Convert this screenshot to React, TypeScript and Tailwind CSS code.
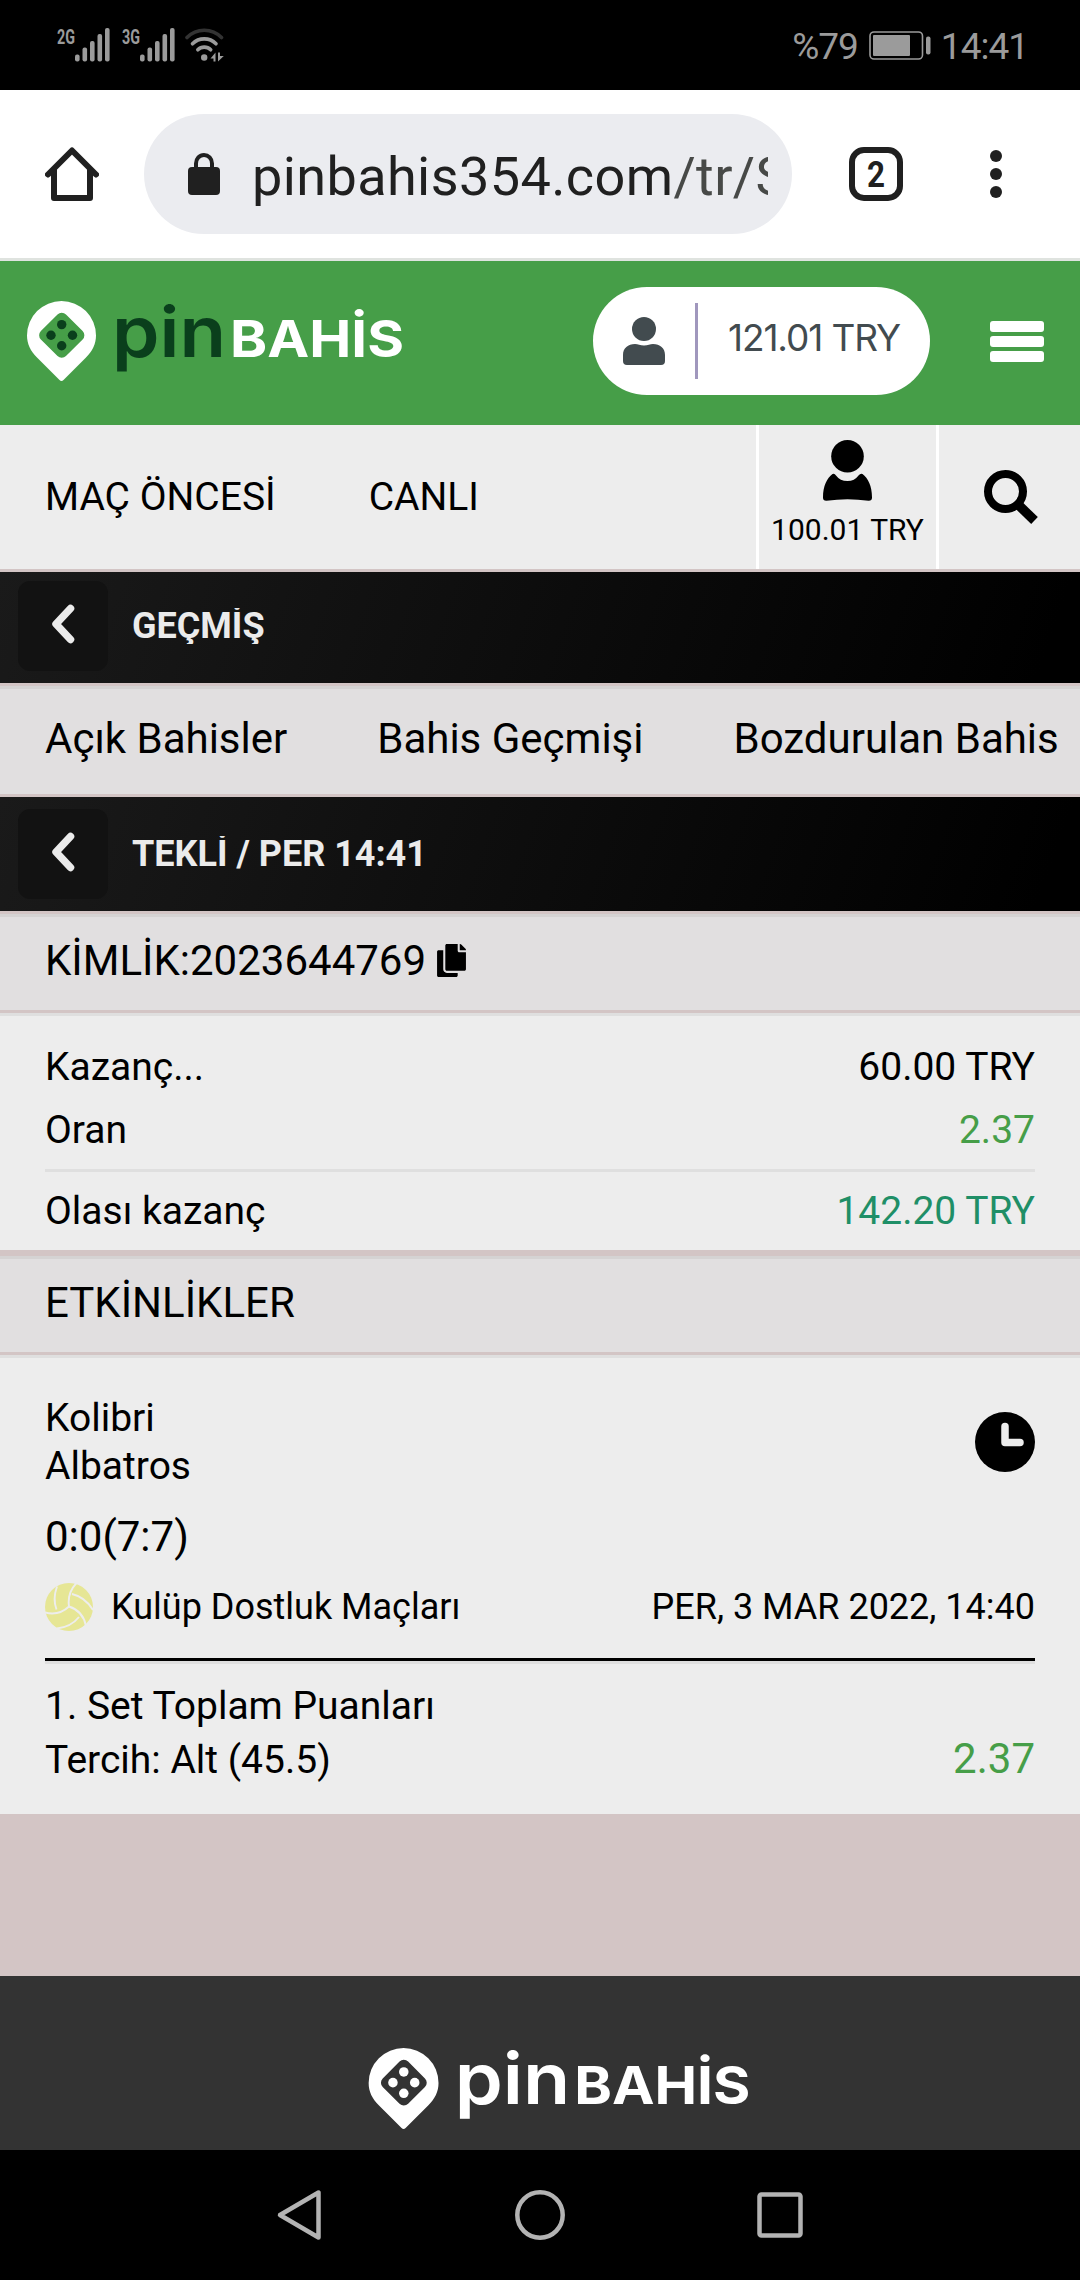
import { ReactNode } from "react";
import { FaCopy } from "react-icons/fa";

function SignalIcon({ label }: { label: string }) {
  return (
    <svg width="65" height="34" viewBox="0 0 65 34" className="shrink-0 overflow-visible" aria-hidden>
      <text
        x="0"
        y="15.5"
        textLength="18"
        lengthAdjust="spacingAndGlyphs"
        fill="#9b9b9b"
        className="font-['Roboto'] text-[21px] font-bold"
      >
        {label}
      </text>
      <g fill="#9b9b9b">
        <rect x="18" y="26.5" width="4.6" height="7" rx="2" />
        <rect x="25.5" y="19.5" width="4.6" height="14" rx="2" />
        <rect x="33" y="13" width="4.6" height="20.5" rx="2" />
        <rect x="40.5" y="6" width="4.6" height="27.5" rx="2" />
        <rect x="48" y="0" width="4.6" height="33.5" rx="2" />
      </g>
    </svg>
  );
}

function WifiIcon() {
  return (
    <svg width="39" height="34" viewBox="0 0 39 34" className="-ml-[2px] shrink-0" aria-hidden>
      <g fill="none" strokeWidth="3.6" strokeLinecap="round">
        <path d="M2 9.5A24 24 0 0 1 36.5 9.5" stroke="#333" />
        <path d="M7.5 15.8A16.5 16.5 0 0 1 31 15.8" stroke="#9b9b9b" />
        <path d="M12.8 21.8A9 9 0 0 1 25.7 21.8" stroke="#9b9b9b" />
      </g>
      <circle cx="19.2" cy="29.5" r="3.2" fill="#9b9b9b" />
      <path d="M25.5 30.5L30.5 24.5V33.5H28.5V30.5Z" fill="#9b9b9b" />
      <path d="M38.8 28L33 33.5V24.5H35V28Z" fill="#9b9b9b" />
    </svg>
  );
}

function BatteryIcon() {
  return (
    <svg width="62" height="29" viewBox="0 0 62 29" className="shrink-0" aria-hidden>
      <rect x="1" y="1" width="52.5" height="27" rx="4" fill="none" stroke="#9b9b9b" strokeWidth="1.6" />
      <rect x="4" y="4" width="37" height="21" rx="1" fill="#9b9b9b" />
      <rect x="57" y="5.5" width="4.5" height="18" rx="2" fill="#9b9b9b" />
    </svg>
  );
}

function HomeIcon() {
  return (
    <svg width="54" height="54" viewBox="0 0 54 54" fill="none" aria-hidden>
      <path
        d="M3 27.5L27 3.5L51 27.5M9 23V51H45V23"
        stroke="#202020"
        strokeWidth="6"
        strokeLinecap="round"
        strokeLinejoin="round"
      />
    </svg>
  );
}

function LockIcon() {
  return (
    <svg width="32" height="42" viewBox="0 0 32 42" className="shrink-0" aria-hidden>
      <path d="M8 16V10.5A8 8.5 0 0 1 24 10.5V16" fill="none" stroke="#202020" strokeWidth="4" />
      <rect x="0" y="14" width="32" height="28" rx="4" fill="#202020" />
    </svg>
  );
}

function TabsIcon() {
  return (
    <svg width="54" height="54" viewBox="0 0 54 54" aria-hidden>
      <rect x="3" y="3" width="48" height="48" rx="12" fill="none" stroke="#202020" strokeWidth="6" />
      <text
        x="18"
        y="40"
        textLength="18"
        lengthAdjust="spacingAndGlyphs"
        fill="#202020"
        className="font-['Roboto'] text-[37px] font-bold"
      >
        2
      </text>
    </svg>
  );
}

function MoreIcon() {
  return (
    <svg width="12" height="48" viewBox="0 0 12 48" fill="#202020" aria-hidden>
      <circle cx="6" cy="6" r="6" />
      <circle cx="6" cy="24" r="6" />
      <circle cx="6" cy="42" r="6" />
    </svg>
  );
}

type LogoProps = { className: string; accent: string; hole: string; dots: string };

function Logo({ className, accent, hole, dots }: LogoProps) {
  return (
    <svg viewBox="0 0 376 80" className={`overflow-visible ${className}`} role="img" aria-label="pinBAHİS">
      <path
        d="M34.5 0A34.5 34.5 0 0 0 0 34.5C0 43 3.5 50 10 56.5L32.5 79Q34.5 81 36.5 79L59 56.5C65.5 50 69 43 69 34.5A34.5 34.5 0 0 0 34.5 0Z"
        fill="#fff"
      />
      <rect x="17" y="16.5" width="35.5" height="35.5" rx="6" transform="rotate(45 34.75 34.25)" fill={hole} />
      <g fill={dots}>
        <circle cx="34.7" cy="23.6" r="4.7" />
        <circle cx="34.7" cy="44.8" r="4.7" />
        <circle cx="24" cy="34.2" r="4.7" />
        <circle cx="45.5" cy="34.2" r="4.7" />
      </g>
      <text
        x="85"
        y="55.5"
        textLength="114"
        lengthAdjust="spacingAndGlyphs"
        fill={accent}
        className="font-['Inter'] text-[70px] font-semibold"
      >
        pin
      </text>
      <text
        x="203"
        y="55.5"
        textLength="174"
        lengthAdjust="spacingAndGlyphs"
        fill="#fff"
        className="font-['Inter'] text-[51px] font-bold"
      >
        BAHİS
      </text>
    </svg>
  );
}

function WalletUserIcon() {
  return (
    <svg width="42" height="48" viewBox="0 0 42 48" fill="#424b4f" aria-hidden>
      <circle cx="21" cy="12" r="12" />
      <path d="M0 44V38C0 31 5 27 12 27C15 27 17 28.5 21 28.5S27 27 30 27C37 27 42 31 42 38V44Q42 48 38 48H4Q0 48 0 44Z" />
    </svg>
  );
}

function AccountIcon() {
  return (
    <svg width="49" height="61" viewBox="0 0 49 61" aria-hidden>
      <circle cx="24.5" cy="16.3" r="16.3" />
      <path d="M9.5 34Q11.5 33 13 35.5Q17 41 24.5 41Q31.5 41 35.5 35.5Q37.5 33 39.5 34C45 38 49 46 49 57.5Q49 61 45.5 60.8Q24.5 57.5 3.5 60.8Q0 61 0 57.5C0 46 4 38 9.5 34Z" />
    </svg>
  );
}

function SearchIcon() {
  return (
    <svg width="54" height="54" viewBox="0 0 54 54" fill="none" stroke="#000" aria-hidden>
      <circle cx="21.5" cy="21.5" r="17.5" strokeWidth="8" />
      <path d="M33.5 34L50.5 50.5" strokeWidth="9.5" />
    </svg>
  );
}

function ClockIcon() {
  return (
    <svg width="60" height="60" viewBox="0 0 60 60" className="shrink-0" aria-hidden>
      <circle cx="30" cy="30" r="30" />
      <path
        d="M30 14.5V30.5H45"
        fill="none"
        stroke="#ededed"
        strokeWidth="7.5"
        strokeLinecap="round"
        strokeLinejoin="round"
      />
    </svg>
  );
}

function VolleyballIcon() {
  return (
    <svg width="48" height="48" viewBox="0 0 48 48" className="shrink-0" aria-hidden>
      <circle cx="24" cy="24" r="24" fill="#e6e695" />
      <g fill="none" stroke="#ededed" strokeWidth="1.9">
        <path d="M12 3.5Q7.5 16 11.5 26.5" />
        <path d="M31.5 0Q22 10 24 23.5Q14 33 0 29.5" />
        <path d="M24 23.5Q38 28 41 43" />
        <path d="M27 11Q40 14 48 27" />
        <path d="M12 45.5Q26 44 34 34" />
      </g>
    </svg>
  );
}

function BackBar({ title, className }: { title: string; className: string }) {
  return (
    <div
      className={`flex bg-[linear-gradient(110deg,#1a1a1a_0%,#000_96%)] pl-[18px] ${className}`}
    >
      <button
        type="button"
        className="flex size-[90px] items-center justify-center rounded-xl bg-[#121212] pb-[4px]"
      >
        <svg width="24" height="40" viewBox="0 0 24 40" fill="none" aria-hidden>
          <path
            d="M19.5 4.5L5 20L19.5 35.5"
            stroke="#ebebeb"
            strokeWidth="7.5"
            strokeLinecap="round"
            strokeLinejoin="round"
          />
        </svg>
      </button>
      <h2 className="ml-[24px] mt-[27px] h-9 overflow-hidden text-[36px] font-bold leading-[36px] text-[#ebebeb]">
        {title}
      </h2>
    </div>
  );
}

function SectionTitle({ children }: { children: ReactNode }) {
  return (
    <div className="flex h-[96px] items-center border-t-[3px] border-[#d5d3d3] bg-[#e1dfe0] px-[45px] pb-[6px] text-[42px] leading-[48px]">
      {children}
    </div>
  );
}

function Row({ label, value, color }: { label: string; value: string; color: string }) {
  return (
    <div className="flex h-[63px] items-center justify-between">
      <span>{label}</span>
      <span className={color}>{value}</span>
    </div>
  );
}

export default function App() {
  return (
    <div className="flex h-[2280px] w-[1080px] flex-col overflow-hidden bg-[#d3c5c5] font-['Roboto',sans-serif] text-black">
      {/* Android status bar */}
      <div className="flex h-[90px] shrink-0 items-center bg-black pl-[57px] pr-[52px] text-[37px] text-[#9b9b9b]">
        <SignalIcon label="2G" />
        <SignalIcon label="3G" />
        <WifiIcon />
        <span className="ml-auto pt-[3px] tracking-[-1px]">%79</span>
        <span className="ml-[11px]">
          <BatteryIcon />
        </span>
        <span className="ml-[10px] pt-[3px] tracking-[-1px]">14:41</span>
      </div>

      {/* Browser toolbar */}
      <div className="flex h-[171px] shrink-0 items-center border-b-[3px] border-[#dfe3df] bg-white pl-[45px] pr-[78px]">
        <HomeIcon />
        <div className="ml-[45px] flex h-[120px] w-[648px] items-center rounded-full bg-[#ebecf0] pl-[44px]">
          <LockIcon />
          <div className="ml-[32px] w-[516px] overflow-hidden whitespace-nowrap pt-[5px] text-[54px] leading-[72px] tracking-[0.4px] text-[#202020]">
            pinbahis354.com<span className="text-[#474947]">/tr/S</span>
          </div>
        </div>
        <div className="ml-[57px]">
          <TabsIcon />
        </div>
        <div className="ml-auto">
          <MoreIcon />
        </div>
      </div>

      {/* Site header */}
      <header className="flex h-[164px] shrink-0 items-center bg-[#469e48] pb-[4px] pl-[27px] pr-[36px]">
        <Logo className="h-[80px] w-[376px]" accent="#0a3f1c" hole="#469e48" dots="#0a3f1c" />
        <div className="ml-[190px] flex h-[108px] w-[337px] items-center rounded-full bg-white pl-[30px]">
          <WalletUserIcon />
          <span className="ml-[30px] h-[76px] w-[3px] bg-[#a097bd]" />
          <span className="ml-[30px] whitespace-nowrap pb-[7px] font-['Inter'] text-[37px] leading-[48px] tracking-[-1.1px] text-[#424b4f]">
            121.01 TRY
          </span>
        </div>
        <button type="button" className="ml-auto flex w-[54px] flex-col gap-[4px]">
          <span className="h-[11px] rounded-[3px] bg-white" />
          <span className="h-[11px] rounded-[3px] bg-white" />
          <span className="h-[11px] rounded-[3px] bg-white" />
        </button>
      </header>

      {/* Sportsbook menu */}
      <nav className="flex h-[144px] shrink-0 items-center bg-[#ededed] pl-[45px] text-[39px]">
        <span>MAÇ ÖNCESİ</span>
        <span className="ml-[93px]">CANLI</span>
        <div className="ml-auto flex h-full w-[183px] flex-col items-center border-x-[3px] border-white pt-[15px]">
          <AccountIcon />
          <span className="mt-[11px] whitespace-nowrap text-[30px] leading-[36px]">100.01 TRY</span>
        </div>
        <div className="flex h-full w-[141px] items-center justify-center pl-[3px]">
          <SearchIcon />
        </div>
      </nav>

      <BackBar title="GEÇMİŞ" className="mt-[3px] h-[111px] shrink-0 pt-[9px]" />

      <div className="mt-[3px] flex h-[108px] shrink-0 items-center gap-[90px] overflow-hidden whitespace-nowrap border-t-[3px] border-[#d5d3d3] bg-[#e1dfe0] pb-[6px] pl-[45px] text-[42px]">
        <span>Açık Bahisler</span>
        <span>Bahis Geçmişi</span>
        <span>Bozdurulan Bahis</span>
      </div>

      <BackBar title="TEKLİ / PER 14:41" className="mt-[3px] h-[114px] shrink-0 pt-[12px]" />

      <div className="mt-[3px] shrink-0">
        <SectionTitle>
          KİMLİK:2023644769
          <FaCopy className="ml-[11px] h-[33px] w-[29px]" />
        </SectionTitle>
      </div>

      <div className="mt-[3px] h-[237px] shrink-0 border-t-[3px] border-[#dfdfdf] bg-[#ededed] px-[45px] pt-[20px] text-[39px]">
        <Row label="Kazanç..." value="60.00 TRY" color="text-black" />
        <Row label="Oran" value="2.37" color="text-[#469e48]" />
        <div className="mt-[7px] border-t-[3px] border-[#dfdfdf] pt-[8px]">
          <Row label="Olası kazanç" value="142.20 TRY" color="text-[#1f8f67]" />
        </div>
      </div>

      <div className="mt-[6px] shrink-0">
        <SectionTitle>ETKİNLİKLER</SectionTitle>
      </div>

      <div className="mt-[3px] h-[459px] shrink-0 border-t-[3px] border-[#dfdfdf] bg-[#ededed] px-[45px] pt-[36px] text-[39px]">
        <div className="flex items-center justify-between leading-[48px]">
          <div>
            <p>Kolibri</p>
            <p>Albatros</p>
          </div>
          <ClockIcon />
        </div>
        <p className="text-[42px] leading-[93px]">0:0(7:7)</p>
        <div className="flex h-[48px] items-center text-[36px]">
          <VolleyballIcon />
          <span className="ml-[18px]">Kulüp Dostluk Maçları</span>
          <span className="ml-auto">PER, 3 MAR 2022, 14:40</span>
        </div>
        <div className="mt-[27px] h-[6px] border-t-[3px] border-black bg-[#dfdfdf]" />
        <div className="mt-[17px] leading-[54px]">
          <p className="leading-[51px]">1. Set Toplam Puanları</p>
          <div className="flex items-baseline justify-between">
            <span>Tercih: Alt (45.5)</span>
            <span className="text-[42px] text-[#469e48]">2.37</span>
          </div>
        </div>
      </div>

      <footer className="mt-[162px] flex h-[174px] shrink-0 bg-[#333] pl-[368px] pt-[72px]">
        <Logo className="h-[81px] w-[382px]" accent="#fff" hole="#333" dots="#fff" />
      </footer>

      {/* Android navigation bar */}
      <div className="flex h-[130px] shrink-0 items-center justify-center bg-black">
        <svg width="560" height="60" viewBox="0 0 560 60" fill="none" stroke="#b3b3b3" strokeWidth="4.5" aria-hidden>
          <path d="M58.5 7.5V52.5L20 30Z" strokeLinejoin="round" />
          <circle cx="280" cy="30" r="22.7" />
          <rect x="499.5" y="9.5" width="41" height="41" rx="2" />
        </svg>
      </div>
    </div>
  );
}
